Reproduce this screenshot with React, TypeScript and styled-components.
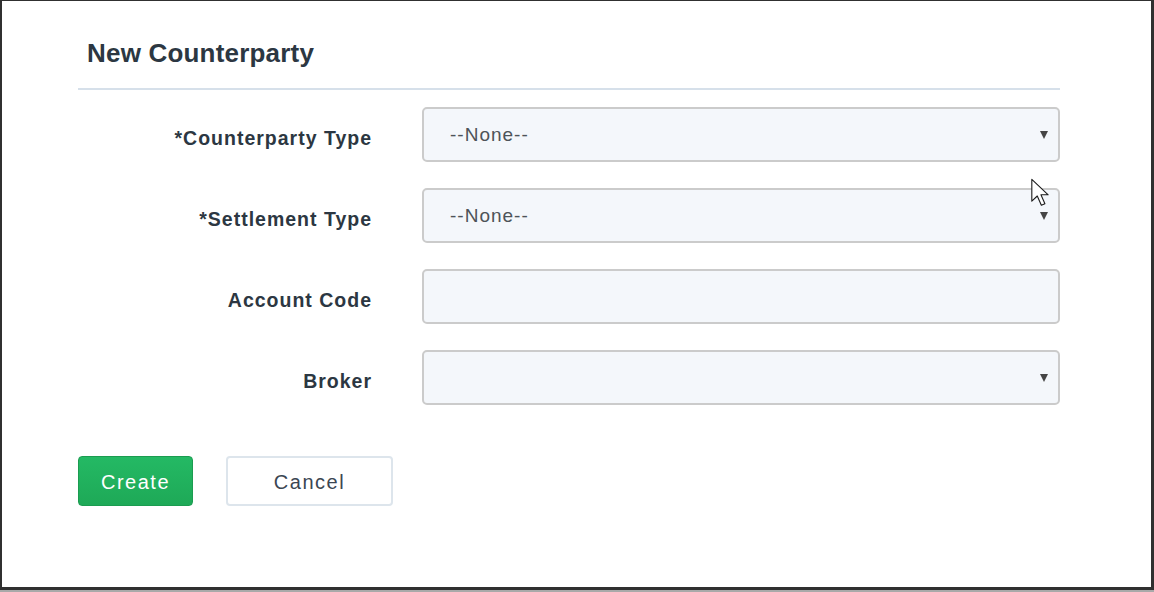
import styled, { createGlobalStyle } from "styled-components";

const GlobalStyle = createGlobalStyle`
  html, body {
    margin: 0;
    padding: 0;
    background: #a9a9a9;
  }
  * {
    box-sizing: border-box;
  }
`;

const Window = styled.div`
  position: relative;
  width: 1154px;
  height: 590px;
  background: #ffffff;
  border-style: solid;
  border-color: #303030;
  border-width: 1px 3px 3px 2px;
  padding: 37px 0 0 76px;
  font-family: "Liberation Sans", Arial, sans-serif;
  color: #2c3742;
`;

const Panel = styled.div`
  width: 982px;
  display: flex;
  flex-direction: column;
`;

const Title = styled.h2`
  margin: 0;
  padding-left: 9px;
  font-size: 26px;
  line-height: 30px;
  font-weight: 700;
  letter-spacing: 0.2px;
  color: #2c3742;
`;

const Divider = styled.hr`
  margin: 20px 0 17px;
  border: none;
  height: 2px;
  background: #d6e0ea;
`;

const Form = styled.div`
  display: grid;
  grid-template-columns: 294px 638px;
  column-gap: 50px;
  row-gap: 26px;
  align-items: center;
`;

const Label = styled.label`
  padding-top: 8px;
  text-align: right;
  font-size: 19.5px;
  font-weight: 700;
  letter-spacing: 1px;
  color: #2c3742;
`;

const Field = styled.div`
  position: relative;
  height: 55px;
  display: flex;
  align-items: center;
  padding-left: 26px;
  background: #f4f7fb;
  border: 2px solid #cbcbcb;
  border-radius: 5px;
  font-size: 19px;
  letter-spacing: 1px;
  color: #4d5358;
`;

const Caret = styled.span`
  position: absolute;
  right: 10px;
  top: 50%;
  margin-top: -4px;
  width: 0;
  height: 0;
  border-left: 4.5px solid transparent;
  border-right: 4.5px solid transparent;
  border-top: 8px solid #454545;
`;

const Actions = styled.div`
  display: flex;
  gap: 33px;
  margin-top: 51px;
`;

const Button = styled.button<{ $primary?: boolean }>`
  height: 50px;
  width: ${(p) => (p.$primary ? "115px" : "167px")};
  padding-top: 3px;
  border-radius: 4px;
  font-family: "Liberation Sans", Arial, sans-serif;
  font-size: 20px;
  letter-spacing: 1.5px;
  cursor: pointer;
  background: ${(p) =>
    p.$primary ? "linear-gradient(#24b964, #1ea957)" : "#ffffff"};
  border: ${(p) => (p.$primary ? "1px solid #1b9c50" : "2px solid #dde5ec")};
  color: ${(p) => (p.$primary ? "#ffffff" : "#3b4652")};
`;

const Pointer = styled.svg`
  position: absolute;
  left: 1028px;
  top: 177px;
  pointer-events: none;
`;

const fields = [
  { label: "*Counterparty Type", value: "--None--", select: true },
  { label: "*Settlement Type", value: "--None--", select: true },
  { label: "Account Code", value: "", select: false },
  { label: "Broker", value: "", select: true },
];

export default function App() {
  return (
    <>
      <GlobalStyle />
      <Window>
        <Panel>
          <Title>New Counterparty</Title>
          <Divider />
          <Form>
            {fields.map((f) => (
              <>
                <Label key={f.label + "-l"}>{f.label}</Label>
                <Field key={f.label + "-f"}>
                  {f.value}
                  {f.select && <Caret />}
                </Field>
              </>
            ))}
          </Form>
          <Actions>
            <Button $primary>Create</Button>
            <Button>Cancel</Button>
          </Actions>
        </Panel>
        <Pointer width="20" height="30" viewBox="0 0 14 22">
          <path
            d="M1 1 L1 17 L5 13.2 L8 20 L10.6 18.9 L7.7 12.3 L13 12.3 Z"
            fill="#ffffff"
            stroke="#1a1a1a"
            strokeWidth="0.8"
            strokeLinejoin="round"
          />
        </Pointer>
      </Window>
    </>
  );
}
